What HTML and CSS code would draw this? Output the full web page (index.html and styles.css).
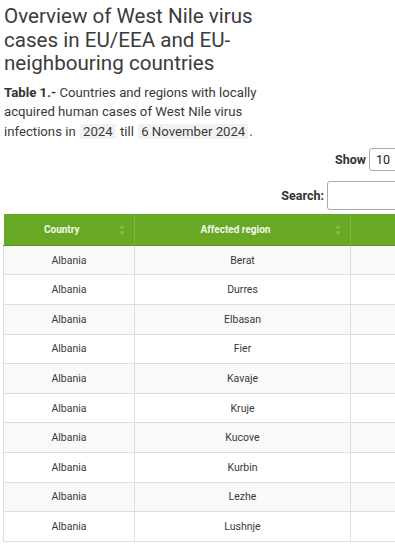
FILE: index.html
```html
<!DOCTYPE html>
<html>
<head>
<meta charset="utf-8">
<link rel="stylesheet" href="styles.css">
</head>
<body>
<div class="page">
  <h1 class="title">Overview of West Nile virus cases in EU/EEA and EU-neighbouring countries</h1>
  <p class="intro"><b>Table 1.-</b> Countries and regions with locally acquired human cases of West Nile virus infections in <span class="val">2024</span> till <span class="val">6 November 2024</span>.</p>
  <div class="controls">
    <div class="ctl ctl-show"><label>Show</label><span class="select">10</span></div>
    <div class="ctl ctl-search"><label>Search:</label><span class="input"></span></div>
  </div>
  <div class="table-wrap">
    <table class="data">
      <thead>
        <tr>
          <th class="c1">Country<svg class="sort" width="6" height="12" viewBox="0 0 6 12"><path d="M3 1 L5.5 4.5 H0.5 Z M3 11 L5.5 7.5 H0.5 Z"/></svg></th>
          <th class="c2">Affected region<svg class="sort" width="6" height="12" viewBox="0 0 6 12"><path d="M3 1 L5.5 4.5 H0.5 Z M3 11 L5.5 7.5 H0.5 Z"/></svg></th>
          <th class="c3"></th>
        </tr>
      </thead>
      <tbody>
        <tr><td>Albania</td><td>Berat</td><td></td></tr>
        <tr><td>Albania</td><td>Durres</td><td></td></tr>
        <tr><td>Albania</td><td>Elbasan</td><td></td></tr>
        <tr><td>Albania</td><td>Fier</td><td></td></tr>
        <tr><td>Albania</td><td>Kavaje</td><td></td></tr>
        <tr><td>Albania</td><td>Kruje</td><td></td></tr>
        <tr><td>Albania</td><td>Kucove</td><td></td></tr>
        <tr><td>Albania</td><td>Kurbin</td><td></td></tr>
        <tr><td>Albania</td><td>Lezhe</td><td></td></tr>
        <tr><td>Albania</td><td>Lushnje</td><td></td></tr>
      </tbody>
    </table>
  </div>
</div>
</body>
</html>
```
FILE: styles.css
```css
html, body {
  margin: 0;
  padding: 0;
  background: #ffffff;
  overflow: hidden;
}
body {
  font-family: Roboto, "Liberation Sans", sans-serif;
  color: #3a3a3a;
}
.page {
  padding: 5px 0 0 4px;
}
.title {
  margin: 0;
  font-size: 20.6px;
  font-weight: 400;
  line-height: 23.5px;
  color: #3b3b3b;
  width: 262px;
}
.intro {
  margin: 7px 0 0 0;
  font-size: 13.2px;
  line-height: 19.6px;
  color: #3a3a3a;
  width: 262px;
}
.intro b {
  font-weight: 700;
  color: #333;
}
.val {
  background: #f2f2f2;
  padding: 0 3px;
  margin: 0 1px;
}
.controls {
  display: flex;
  flex-direction: column;
  align-items: flex-end;
  margin-top: 7px;
  width: 391px;
}
.ctl {
  display: flex;
  align-items: center;
  gap: 3px;
  font-size: 12.5px;
  font-weight: 700;
  color: #333;
}
.ctl-show {
  height: 23px;
}
.ctl-search {
  margin-top: 10px;
  height: 29px;
}
.select {
  display: flex;
  align-items: center;
  box-sizing: border-box;
  height: 23px;
  width: 40px;
  margin-right: -14px;
  padding-left: 6px;
  border: 1px solid #aaa;
  border-radius: 3px;
  font-weight: 400;
  font-size: 12.5px;
  color: #222;
}
.input {
  display: block;
  box-sizing: border-box;
  height: 29px;
  width: 90px;
  margin-right: -22px;
  border: 1px solid #aaa;
  border-radius: 3px;
}
.table-wrap {
  margin-top: 4px;
  margin-left: -1px;
  width: 600px;
}
.data {
  border-collapse: collapse;
  table-layout: fixed;
  width: 560px;
}
.data th {
  position: relative;
  background: #68a824;
  color: #f4f8ee;
  font-size: 10px;
  font-weight: 700;
  height: 31px;
  box-sizing: border-box;
  padding: 0 24px 0 10px;
  text-align: center;
  border-left: 1px solid #7cb53d;
  border-right: 1px solid #7cb53d;
  border-bottom: 1px solid #5d9920;
}
.data th.c1 { width: 131px; border-left: none; }
.data th.c2 { width: 216px; }
.data th.c3 { width: 213px; }
.sort {
  position: absolute;
  right: 9px;
  top: 10px;
  fill: #ffffff;
  opacity: 0.25;
}
.data td {
  height: 29.6px;
  box-sizing: border-box;
  padding: 0 10px;
  font-size: 10.5px;
  color: #3a3a3a;
  text-align: center;
  border: 1px solid #dedede;
  border-top: none;
}
.data tbody tr:nth-child(odd) td {
  background: #f9f9f9;
}
.data tbody tr:nth-child(even) td {
  background: #ffffff;
}
```
